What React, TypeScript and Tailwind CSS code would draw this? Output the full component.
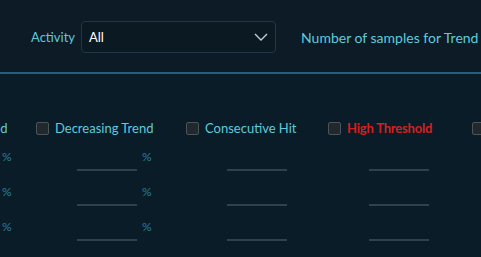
const font = { fontFamily: "Lato, 'Noto Sans', sans-serif" };

type Col = { label: string; width: string; danger?: boolean; percent?: boolean };

const columns: Col[] = [
  { label: "Increasing Trend", width: "w-[140px]", percent: true },
  { label: "Decreasing Trend", width: "w-[150px]", percent: true },
  { label: "Consecutive Hit", width: "w-[142px]" },
  { label: "High Threshold", width: "w-[144px]", danger: true },
  { label: "Low Threshold", width: "w-[144px]" },
];

function Column({ col }: { col: Col }) {
  return (
    <div className={`${col.width} shrink-0 flex flex-col`}>
      <label className="flex items-center h-4 gap-[6px] whitespace-nowrap">
        <span className="w-[13px] h-[13px] shrink-0 rounded-[2px] border border-[#4b5458] bg-[#22292e]" />
        <span
          className={
            col.danger
              ? "text-[13px] font-bold tracking-[-0.2px] text-[#d3201f] pt-[1px]"
              : "text-[13px] text-[#5fcadb] pt-[1px]"
          }
        >
          {col.label}
        </span>
      </label>
      <div className="flex flex-col gap-[7px] mt-[7px] pl-[41px]">
        {[0, 1, 2].map((i) => (
          <div key={i} className="flex items-center">
            <div className="w-[60px] h-[28px] border-b-2 border-[#2e424d]" />
            {col.percent && (
              <span className="ml-[5px] text-[12px] text-[#2a7f95]">%</span>
            )}
          </div>
        ))}
      </div>
    </div>
  );
}

export default function App() {
  return (
    <div className="w-[481px] h-[257px] overflow-hidden bg-[#0b1c29]" style={font}>
      {/* filtros */}
      <div className="h-[72px] bg-[#0d1b26] flex items-start pt-[21px] pl-[31px] whitespace-nowrap">
        <span className="text-[13px] text-[#5fcadb] h-8 flex items-center pt-[1px]">Activity</span>
        <div className="ml-[6px] w-[195px] h-8 shrink-0 rounded-[4px] border border-[#1f3746] bg-[#0b1923] flex items-center justify-between pl-[7px] pr-[7px]">
          <span className="text-[13px] text-white pt-[1px]">All</span>
          <svg width="14" height="8" viewBox="0 0 14 8" fill="none">
            <polyline points="1,1 7,7 13,1" stroke="#c7d3d9" strokeWidth="1.3" />
          </svg>
        </div>
        <span className="ml-[25px] text-[14px] text-[#5fcadb] h-8 flex items-center pt-[1px]">
          Number of samples for Trend
        </span>
      </div>
      <div className="h-[2px] bg-[#27607c]" />
      {/* checkboxes */}
      <div className="flex pt-[46px] ml-[-104px]">
        {columns.map((c) => (
          <Column key={c.label} col={c} />
        ))}
      </div>
    </div>
  );
}
